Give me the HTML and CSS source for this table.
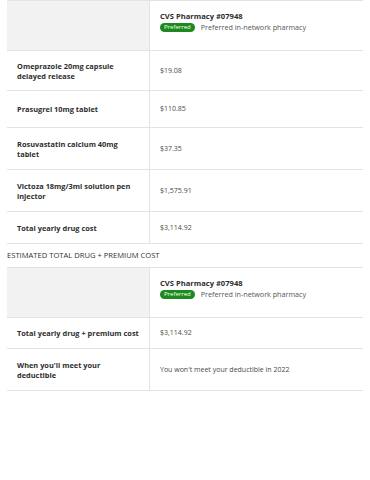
FILE: index.html
```html
<!DOCTYPE html>
<html>
<head>
<meta charset="utf-8">
<link rel="stylesheet" href="styles.css">
</head>
<body>
<div class="page">
  <table class="cmp">
    <tr class="head">
      <td class="lab blank"></td>
      <td class="val">
        <div class="ph">CVS Pharmacy #07948</div>
        <div class="pref"><span class="badge">Preferred</span><span class="pdesc">Preferred in-network pharmacy</span></div>
      </td>
    </tr>
    <tr class="h40"><td class="lab">Omeprazole 20mg capsule delayed release</td><td class="val">$19.08</td></tr>
    <tr class="h37"><td class="lab">Prasugrel 10mg tablet</td><td class="val">$110.85</td></tr>
    <tr class="h42"><td class="lab"><span class="narrow">Rosuvastatin calcium 40mg tablet</span></td><td class="val">$37.35</td></tr>
    <tr class="h42"><td class="lab">Victoza 18mg/3ml solution pen injector</td><td class="val">$1,575.91</td></tr>
    <tr class="h32"><td class="lab">Total yearly drug cost</td><td class="val">$3,114.92</td></tr>
  </table>
  <div class="section">ESTIMATED TOTAL DRUG + PREMIUM COST</div>
  <table class="cmp">
    <tr class="head">
      <td class="lab blank"></td>
      <td class="val">
        <div class="ph">CVS Pharmacy #07948</div>
        <div class="pref"><span class="badge">Preferred</span><span class="pdesc">Preferred in-network pharmacy</span></div>
      </td>
    </tr>
    <tr class="h31"><td class="lab">Total yearly drug + premium cost</td><td class="val">$3,114.92</td></tr>
    <tr class="h42"><td class="lab"><span class="narrow">When you'll meet your deductible</span></td><td class="val">You won't meet your deductible in 2022</td></tr>
  </table>
</div>
</body>
</html>
```
FILE: styles.css
```css
html, body {
  margin: 0;
  padding: 0;
  background: #fff;
}
body {
  font-family: "Open Sans", "DejaVu Sans", sans-serif;
  color: #333;
}
.page {
  padding: 0 7px;
}
.cmp {
  width: 356px;
  border-collapse: collapse;
  table-layout: fixed;
}
.cmp td {
  border-top: 1px solid #e3e3e3;
  border-bottom: 1px solid #e3e3e3;
  padding: 0 10px;
  vertical-align: middle;
}
.cmp td.lab {
  width: 125px;
  padding-right: 7px;
  font-weight: 700;
  font-size: 7.4px;
  line-height: 10px;
  color: #2e2e2e;
  border-right: 1px solid #e3e3e3;
}
.narrow {
  display: block;
  max-width: 108px;
}
.cmp td.val {
  font-size: 7px;
  line-height: 10px;
  color: #4a4a4a;
}
.cmp td.blank {
  background: #f2f2f2;
}
.head {
  height: 50px;
}
.head td.val {
  vertical-align: top;
  padding-top: 10px;
}
.ph {
  font-weight: 700;
  font-size: 7.6px;
  line-height: 11px;
  color: #2e2e2e;
}
.pref {
  display: flex;
  align-items: center;
  gap: 6px;
}
.badge {
  background: #1c8a1c;
  color: #fff;
  font-size: 6px;
  line-height: 9px;
  padding: 0 4px;
  border-radius: 5px;
}
.pdesc {
  font-size: 7.2px;
  color: #555;
}
.h40 { height: 40px; }
.h37 { height: 37px; }
.h42 { height: 42px; }
.h32 { height: 32px; }
.h31 { height: 31px; }
.section {
  font-size: 7.6px;
  line-height: 10px;
  color: #333;
  padding: 6px 0 7px;
}
```
